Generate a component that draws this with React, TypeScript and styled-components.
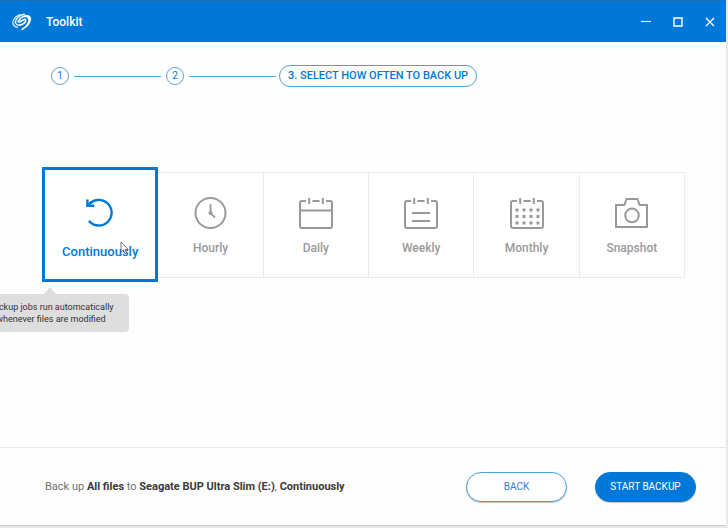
import React from "react";
import styled, { createGlobalStyle } from "styled-components";

const blue = "#0078d7";
const grey = "#999999";

const GlobalStyle = createGlobalStyle`
  * { box-sizing: border-box; }
  html, body, #root { height: 100%; }
  body {
    margin: 0;
    overflow: hidden;
    background: #e9e9e9;
    font-family: Roboto, "Liberation Sans", sans-serif;
  }
  button { font-family: inherit; cursor: pointer; }
`;

const AppWindow = styled.div`
  height: 100%;
  padding: 0 2px 2px 0;
  display: flex;
`;

const Frame = styled.div`
  flex: 1;
  min-width: 0;
  display: flex;
  flex-direction: column;
  background: #fefefe;
  border-bottom: 1px solid #c4c8ca;
`;

const TitleBar = styled.header`
  height: 42px;
  flex: none;
  display: flex;
  align-items: center;
  padding: 0 8px 0 12px;
  background: ${blue};
  border-top: 1px solid #1a6fb5;
  color: #fff;
`;

const Title = styled.h1`
  flex: 1;
  margin: 0 0 0 14px;
  font-size: 12px;
  line-height: 16px;
  font-weight: 500;
`;

const WindowControls = styled.div`
  display: flex;
  gap: 16px;
`;

const ControlButton = styled.button`
  width: 16px;
  height: 16px;
  padding: 0;
  border: 0;
  background: none;
  color: #fff;
  display: grid;
  place-items: center;
`;

const Steps = styled.ol`
  list-style: none;
  display: flex;
  align-items: center;
  margin: 0;
  padding: 23px 0 0 51px;
  color: ${blue};
`;

const StepItem = styled.li`
  display: flex;
  align-items: center;
`;

const StepCircle = styled.span`
  width: 18px;
  height: 18px;
  border: 1px solid #5ba4dd;
  border-radius: 50%;
  display: grid;
  place-items: center;
  font-size: 10px;
  line-height: 12px;
`;

const StepLine = styled.span`
  width: 87px;
  height: 1px;
  margin: 0 5px;
  background: #55a9d9;
`;

const StepPill = styled.span`
  height: 22px;
  padding: 0 8px;
  margin-left: -2px;
  border: 1px solid #4fa3dc;
  border-radius: 11px;
  font-size: 11px;
  line-height: 20px;
  font-weight: 500;
  white-space: nowrap;
`;

const Main = styled.main`
  flex: 1;
  min-height: 0;
  padding: 80px 41px 0 42px;
`;

const Options = styled.div`
  position: relative;
  display: grid;
  grid-template-columns: 116fr repeat(5, 105fr);
  align-items: center;
`;

const OptionCard = styled.button<{ $selected?: boolean }>`
  height: ${(p) => (p.$selected ? 115 : 106)}px;
  padding: ${(p) => (p.$selected ? "6px 0 0" : "2px 0 0")};
  min-width: 0;
  display: flex;
  flex-direction: column;
  align-items: center;
  justify-content: center;
  gap: ${(p) => (p.$selected ? 14 : 10)}px;
  background: #fff;
  border: ${(p) => (p.$selected ? `3px solid ${blue}` : "1px solid #ebebeb")};
  border-left-width: ${(p) => (p.$selected ? 3 : 0)}px;
  color: ${(p) => (p.$selected ? blue : grey)};
  font-size: ${(p) => (p.$selected ? 13 : 12)}px;
  line-height: 16px;
  font-weight: 500;
`;

const Tooltip = styled.div`
  position: absolute;
  top: 127px;
  left: 8px;
  width: 158px;
  transform: translateX(-50%);
  padding: 7px 12px 7px 14px;
  border-radius: 4px;
  background: #dedede;
  color: #333;
  font-size: 9px;
  line-height: 12px;
  text-align: center;
  white-space: nowrap;

  &::before {
    content: "";
    position: absolute;
    top: -7px;
    left: 50%;
    transform: translateX(-50%);
    border: 6px solid transparent;
    border-top: 0;
    border-bottom: 7px solid #dedede;
  }
`;

const Pointer = styled.svg`
  position: absolute;
  left: 78px;
  top: 74px;
  pointer-events: none;
`;

const Footer = styled.footer`
  height: 78px;
  flex: none;
  display: flex;
  align-items: center;
  gap: 28px;
  padding: 0 30px 0 45px;
  border-top: 1px solid #e6e6e6;
`;

const Summary = styled.p`
  flex: 1;
  margin: 0;
  font-size: 11px;
  line-height: 16px;
  color: #707070;
  white-space: nowrap;

  b { color: #3a3a3a; font-weight: 700; }
`;

const ActionButton = styled.button<{ $primary?: boolean }>`
  width: 101px;
  height: 30px;
  padding: 0;
  border: 1px solid ${(p) => (p.$primary ? blue : "#4c9edb")};
  border-radius: 15px;
  background: ${(p) => (p.$primary ? blue : "#fff")};
  color: ${(p) => (p.$primary ? "#fff" : "#2f7fc8")};
  font-size: 10px;
  line-height: 16px;
  box-shadow: 0 1px 1px rgba(0, 0, 0, 0.25);
`;

const Logo = () => (
  <svg width="20" height="18" viewBox="0 0 20 18" fill="none" stroke="#fff" strokeLinecap="round" aria-hidden="true">
    <path
      d="M5.8 8.2C7.6 3.8 13.6 0.6 17.2 2.6C21.4 5.6 17.6 14 9.6 17.2C9.4 17 9.4 16.4 9.6 16C14.6 13 18 7.4 15.6 4.8C13.4 2.8 9 4.8 7.4 7.6C7.4 9 9.4 8 10.2 7.4L13.6 5.8"
      fill="#fff"
      fillRule="evenodd"
      strokeWidth="0.2"
    />
    <path d="M6 8.4C6.6 9.8 9 8.6 10.4 7.6C11.6 6.8 12.8 6.2 13.6 6.4C14.6 9 10.6 11.8 7.6 12.2" strokeWidth="1.5" />
    <path d="M7.6 12.2C3.6 12.4 2.4 9.4 4.4 6.4C6 4 9 2 12.4 1.2" strokeWidth="1.3" />
    <path d="M5.6 14.4C1.6 13.8 0 10.6 1.4 7.4C2.6 4.6 5 2.6 8 1.4" strokeWidth="1.1" />
  </svg>
);

const icon = { fill: "none", stroke: "currentColor", strokeWidth: 2, "aria-hidden": true } as const;

const ContinuousIcon = () => (
  <svg {...icon} strokeWidth="2.4" width="34" height="34" viewBox="0 0 34 34">
    <path d="M5.6 9A12.8 12.8 0 1 1 6.6 25.6" strokeLinecap="round" />
    <path d="M4.4 3.6V9.8H11.4" />
    <path d="M4 9.8L8.6 5.4" strokeWidth="1.6" />
  </svg>
);

const ClockIcon = () => (
  <svg {...icon} width="34" height="34" viewBox="0 0 34 34">
    <circle cx="16.5" cy="17" r="15" />
    <path d="M16.5 8V17L21 21.6" strokeWidth="1.8" />
    <circle cx="16.5" cy="17" r="2" fill="currentColor" stroke="none" />
  </svg>
);

const CalendarIcon = ({ children }: { children: React.ReactNode }) => (
  <svg {...icon} width="36" height="34" viewBox="0 0 36 34">
    <path d="M8 5H4Q2 5 2 7V30Q2 32 4 32H32Q34 32 34 30V7Q34 5 32 5H28M14.4 5H21.6" />
    <path d="M11.2 2V8M24.8 2V8" />
    {children}
  </svg>
);

const CameraIcon = () => (
  <svg {...icon} width="36" height="34" viewBox="0 0 36 34">
    <path d="M2 9H10.4L12.4 3H23.6L25.6 9H33V31H2Z" strokeLinejoin="round" />
    <circle cx="18" cy="19.4" r="6.8" />
  </svg>
);

const options = [
  { name: "Continuously", icon: <ContinuousIcon />, selected: true },
  { name: "Hourly", icon: <ClockIcon /> },
  { name: "Daily", icon: <CalendarIcon><path d="M2 14.5H34" /></CalendarIcon> },
  { name: "Weekly", icon: <CalendarIcon><path d="M9 17H27M9 25H27" /></CalendarIcon> },
  {
    name: "Monthly",
    icon: (
      <CalendarIcon>
        <path d="M6.5 14H30.5M6.5 20.5H30.5M6.5 27H30.5" strokeWidth="3" strokeDasharray="3 4" />
      </CalendarIcon>
    ),
  },
  { name: "Snapshot", icon: <CameraIcon /> },
];

export default function App() {
  return (
    <AppWindow>
      <GlobalStyle />
      <Frame>
        <TitleBar>
          <Logo />
          <Title>Toolkit</Title>
          <WindowControls>
            <ControlButton aria-label="Minimize">
              <svg width="10" height="10" stroke="currentColor"><path d="M0 4.5H10" /></svg>
            </ControlButton>
            <ControlButton aria-label="Maximize">
              <svg width="10" height="10" stroke="currentColor" fill="none" strokeWidth="1.4"><path d="M1 1H9V9H1Z" /></svg>
            </ControlButton>
            <ControlButton aria-label="Close">
              <svg width="10" height="10" stroke="currentColor" strokeWidth="1.3"><path d="M1 1L9 9M9 1L1 9" /></svg>
            </ControlButton>
          </WindowControls>
        </TitleBar>
        <Steps>
          <StepItem><StepCircle>1</StepCircle><StepLine /></StepItem>
          <StepItem><StepCircle>2</StepCircle><StepLine /></StepItem>
          <StepItem aria-current="step"><StepPill>3. SELECT HOW OFTEN TO BACK UP</StepPill></StepItem>
        </Steps>
        <Main>
          <Options>
            {options.map((o) => (
              <OptionCard key={o.name} type="button" aria-pressed={!!o.selected} $selected={o.selected}>
                {o.icon}
                <span>{o.name}</span>
              </OptionCard>
            ))}
            <Tooltip role="tooltip">
              Backup jobs run automcatically
              <br />
              whenever files are modified
            </Tooltip>
            <Pointer width="9" height="14" viewBox="0 0 9 14" fill="#fff" stroke="#555" strokeWidth="0.8" aria-hidden="true">
              <path d="M1 1V11L3.4 8.9L5 12.8L6.6 12.1L5 8.4H8.2Z" />
            </Pointer>
          </Options>
        </Main>
        <Footer>
          <Summary>
            Back up <b>All files</b> to <b>Seagate BUP Ultra Slim (E:)</b>, <b>Continuously</b>
          </Summary>
          <ActionButton type="button">BACK</ActionButton>
          <ActionButton type="button" $primary>START BACKUP</ActionButton>
        </Footer>
      </Frame>
    </AppWindow>
  );
}
